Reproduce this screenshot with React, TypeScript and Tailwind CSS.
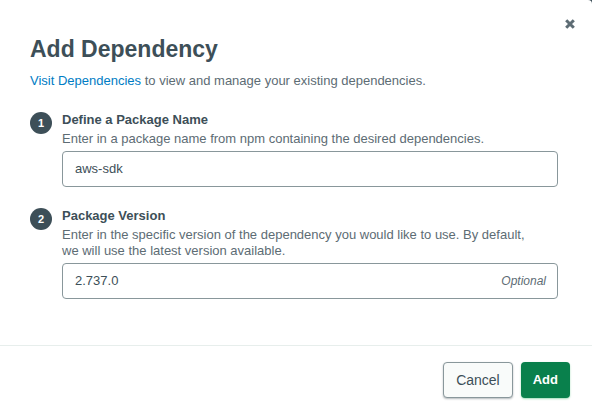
import { useState } from "react";
import type { ReactNode } from "react";

type StepProps = {
  number: number;
  id: string;
  title: string;
  description: string;
  value: string;
  onChange: (value: string) => void;
  hint?: ReactNode;
};

function Step({ number, id, title, description, value, onChange, hint }: StepProps) {
  return (
    <li className="flex gap-2.5">
      <span className="mt-[3px] flex size-[22px] shrink-0 items-center justify-center rounded-full bg-[#3d4f58] text-[11px] font-bold text-white">
        {number}
      </span>
      <div className="min-w-0 flex-1">
        <label htmlFor={id} className="block text-[13px] leading-[22px] font-bold text-[#3d4f58]">
          {title}
        </label>
        <p id={`${id}-description`} className="pr-4 text-[13px] leading-4 text-[#5d6c74]">
          {description}
        </p>
        <div className="mt-1 flex h-9 items-center rounded-sm border border-[#89979b] bg-white pr-[11px] pl-3">
          <input
            id={id}
            type="text"
            aria-describedby={`${id}-description`}
            value={value}
            onChange={(event) => onChange(event.target.value)}
            className="min-w-0 flex-1 text-[13px] leading-5 text-[#3d4f58] outline-none"
          />
          {hint}
        </div>
      </div>
    </li>
  );
}

export default function App() {
  const [name, setName] = useState("aws-sdk");
  const [version, setVersion] = useState("2.737.0");

  return (
    <div className="bg-[#3d4f58]">
      <section
        role="dialog"
        aria-labelledby="dialog-title"
        className="relative rounded-tr-sm bg-white font-['Liberation_Sans',Arial,sans-serif]"
      >
        <button
          type="button"
          aria-label="Close"
          className="absolute top-4 right-3.5 flex size-4 items-center justify-center text-[#5d6c74]"
        >
          <svg viewBox="0 0 10 10" className="size-2.5" fill="none" stroke="currentColor" strokeWidth="3">
            <path d="M1.2 1.2 8.8 8.8M8.8 1.2 1.2 8.8" />
          </svg>
        </button>
        <div className="px-[30px] pt-[33px] pb-[46px]">
          <h1 id="dialog-title" className="text-[23px] leading-8 font-bold text-[#3d4f58]">
            Add Dependency
          </h1>
          <p className="mt-2 text-[13px] leading-4 text-[#5d6c74]">
            <a href="#dependencies" className="text-[#007cc4]">
              Visit Dependencies
            </a>{" "}
            to view and manage your existing dependencies.
          </p>
          <form id="dependency-form" onSubmit={(event) => event.preventDefault()}>
            <ol className="mt-5 mr-1 flex flex-col gap-[18px]">
              <Step
                number={1}
                id="package-name"
                title="Define a Package Name"
                description="Enter in a package name from npm containing the desired dependencies."
                value={name}
                onChange={setName}
              />
              <Step
                number={2}
                id="package-version"
                title="Package Version"
                description="Enter in the specific version of the dependency you would like to use. By default, we will use the latest version available."
                value={version}
                onChange={setVersion}
                hint={<span className="text-xs text-[#5d6c74] italic">Optional</span>}
              />
            </ol>
          </form>
        </div>
        <footer className="flex justify-end gap-2 border-t border-[#e7eeec] px-[22px] pt-4 pb-[13px]">
          <button
            type="button"
            className="h-9 rounded-sm border border-[#89979b] bg-[#f9fbfa] px-3 text-sm text-[#3d4f58] shadow-[0_1px_2px_rgba(6,22,33,0.3)]"
          >
            Cancel
          </button>
          <button
            type="submit"
            form="dependency-form"
            className="h-9 rounded-sm bg-[#09804c] px-3 text-[13px] font-bold text-white shadow-[0_1px_2px_rgba(19,170,82,0.4)]"
          >
            Add
          </button>
        </footer>
      </section>
    </div>
  );
}
